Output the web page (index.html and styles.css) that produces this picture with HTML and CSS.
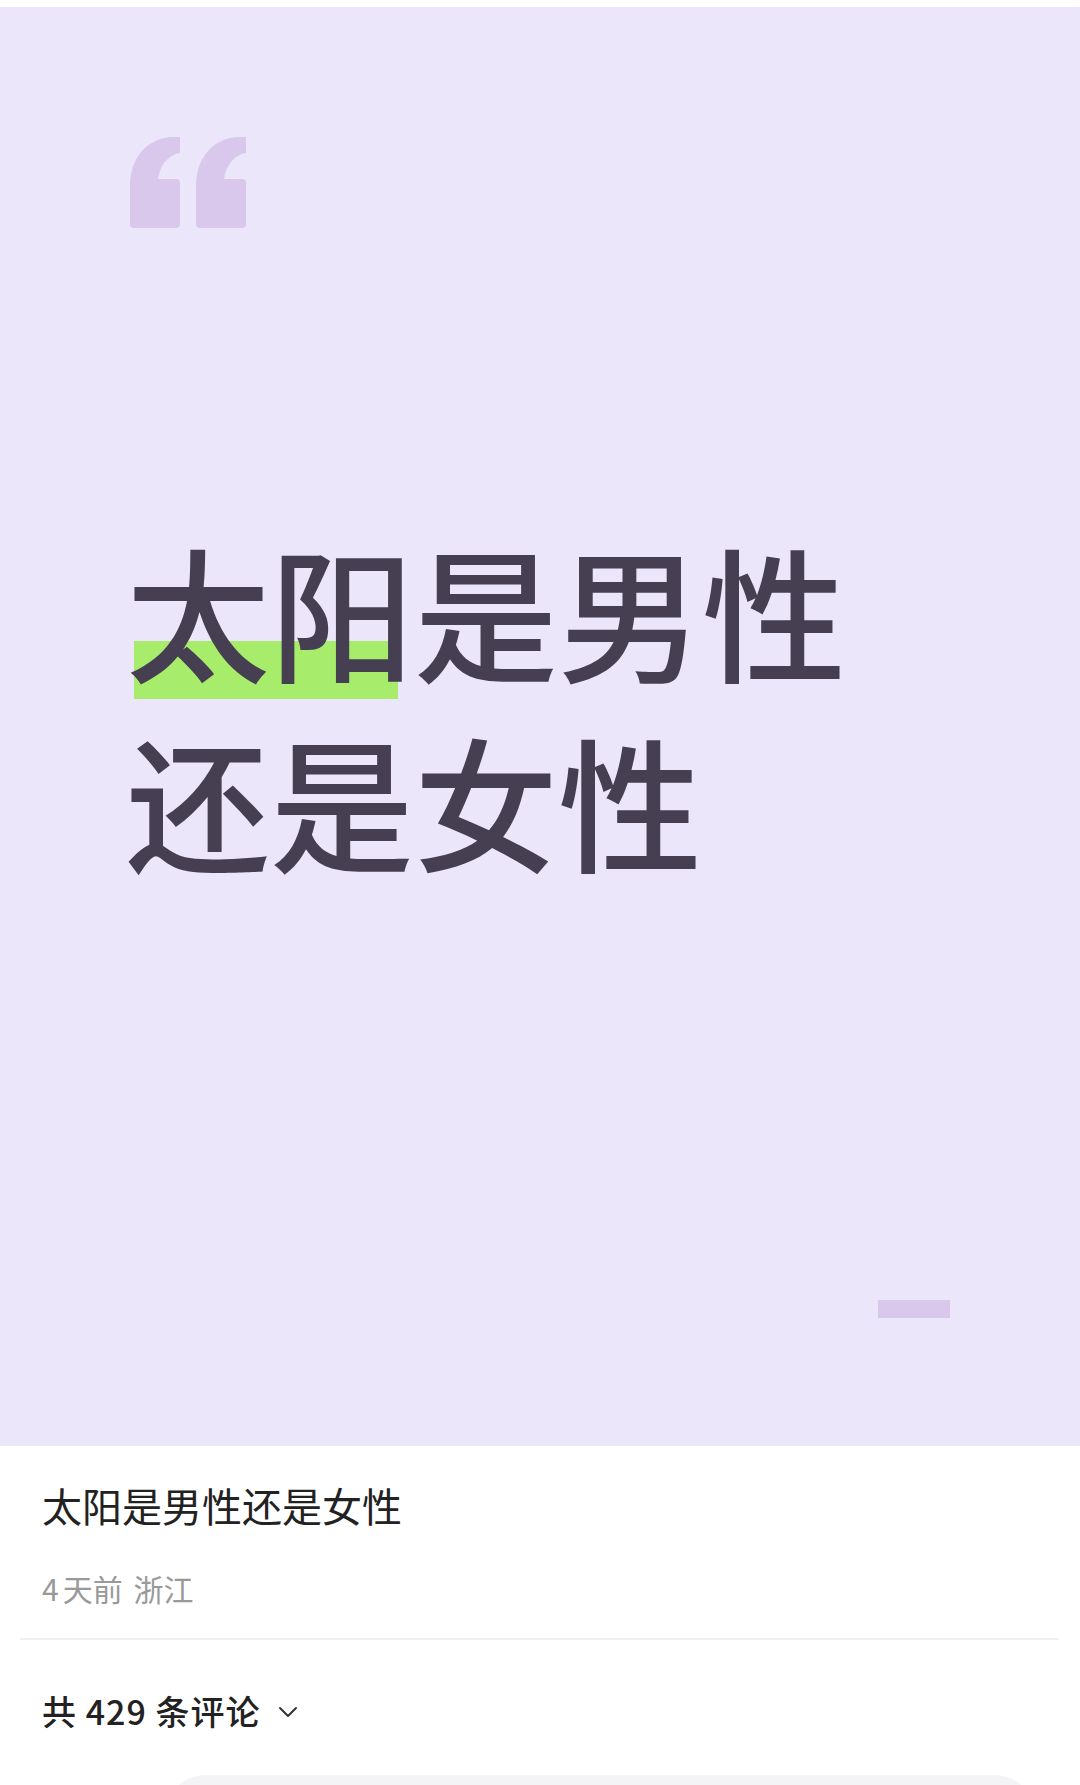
FILE: index.html
```html
<!DOCTYPE html>
<html lang="zh-CN">
<head>
<meta charset="utf-8">
<title>太阳是男性还是女性</title>
<link rel="stylesheet" href="styles.css">
</head>
<body>
<div class="page">
  <div class="topgap"></div>
  <section class="hero">
    <svg class="quote" width="117" height="92" viewBox="0 0 117 92">
      <path d="M40 0 L50 0 L50 16 C38 18 30 28 28 42 L46 42 Q50 42 50 46 L50 87 Q50 91 46 91 L4 91 Q0 91 0 87 L0 50 C0 22 15 3 40 0 Z" fill="#d9c8ec"/>
      <path transform="translate(66 0)" d="M40 0 L50 0 L50 16 C38 18 30 28 28 42 L46 42 Q50 42 50 46 L50 87 Q50 91 46 91 L4 91 Q0 91 0 87 L0 50 C0 22 15 3 40 0 Z" fill="#d9c8ec"/>
    </svg>
    <div class="headline">
      <span class="mark"></span>
      <h1 class="headline-text">太阳是男性<br>还是女性</h1>
    </div>
    <span class="dash"></span>
  </section>
  <section class="info">
    <h2 class="title">太阳是男性还是女性</h2>
    <p class="meta"><span class="num">4</span>天前 浙江</p>
  </section>
  <div class="divider"></div>
  <section class="comments">
    <div class="count">共 429 条评论
      <svg class="chev" width="20" height="12" viewBox="0 0 20 12"><path d="M2 2 L10 10 L18 2" fill="none" stroke="#333" stroke-width="2" stroke-linecap="round" stroke-linejoin="round"/></svg>
    </div>
    <div class="inputbox"></div>
  </section>
</div>
</body>
</html>
```
FILE: styles.css
```css
html, body {
  margin: 0;
  padding: 0;
  background: #ffffff;
}
body {
  font-family: "Noto Sans CJK SC", "Noto Sans", sans-serif;
  overflow: hidden;
}
.page {
  width: 1080px;
  height: 1785px;
  overflow: hidden;
}
.topgap {
  height: 7px;
  background: #ffffff;
}
.hero {
  position: relative;
  height: 1439px;
  background: #ebe6fa;
  box-sizing: border-box;
  padding: 130px 0 0 130px;
  display: flex;
  flex-direction: column;
  align-items: flex-start;
}
.quote {
  display: block;
}
.headline {
  position: relative;
  margin-top: 285px;
  margin-left: -4px;
}
.mark {
  position: absolute;
  left: 8px;
  top: 127px;
  width: 264px;
  height: 58px;
  background: #a8ec6c;
  z-index: 0;
}
.headline-text {
  position: relative;
  z-index: 1;
  margin: 0;
  font-size: 144px;
  line-height: 190px;
  font-weight: 500;
  color: #463f52;
  letter-spacing: 0;
}
.dash {
  position: absolute;
  left: 878px;
  top: 1293px;
  width: 72px;
  height: 18px;
  background: #d9c8ec;
}
.info {
  padding: 31px 42px 0 42px;
}
.title {
  margin: 0;
  font-size: 40px;
  line-height: 56px;
  font-weight: 400;
  color: #222222;
}
.meta {
  margin: 34px 0 0 0;
  font-size: 30px;
  line-height: 42px;
  color: #999999;
  word-spacing: 4px;
}
.num {
  margin-right: 4px;
}
.divider {
  margin: 29px 21px 0 20px;
  height: 2px;
  background: #f0f0f0;
}
.comments {
  padding: 47px 0 0 0;
}
.count {
  display: flex;
  align-items: center;
  padding-left: 42px;
  font-size: 34px;
  line-height: 48px;
  font-weight: 500;
  color: #222222;
  letter-spacing: 1px;
}
.chev {
  margin-left: 18px;
  margin-top: 2px;
}
.inputbox {
  margin: 40px 45px 0 165px;
  height: 90px;
  border-radius: 40px;
  background: #f4f4f6;
}
```
